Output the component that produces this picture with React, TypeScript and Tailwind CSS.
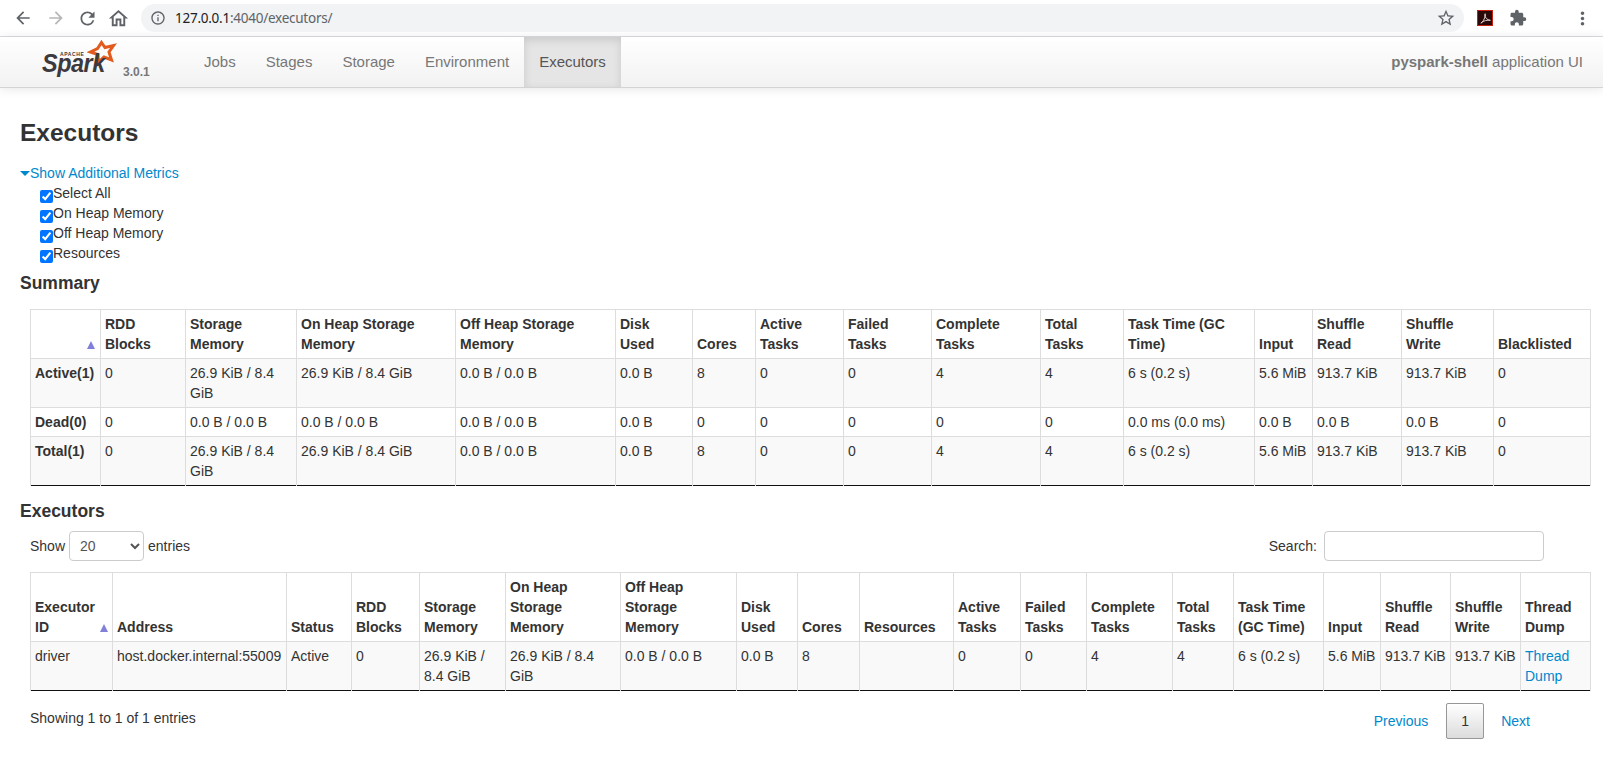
import { MdArrowBack, MdArrowForward, MdExtension, MdInfoOutline, MdMoreVert, MdOutlineHome, MdRefresh, MdStarBorder } from "react-icons/md";

const summaryCols = ["w-[70px]", "w-[85px]", "w-[111px]", "w-[159px]", "w-[160px]", "w-[77px]", "w-[63px]", "w-[88px]", "w-[88px]", "w-[109px]", "w-[83px]", "w-[131px]", "w-[58px]", "w-[89px]", "w-[92px]", "w-[97px]"];
const executorCols = ["w-[82px]", "w-[174px]", "w-[65px]", "w-[68px]", "w-[86px]", "w-[115px]", "w-[116px]", "w-[61px]", "w-[62px]", "w-[94px]", "w-[67px]", "w-[66px]", "w-[86px]", "w-[61px]", "w-[90px]", "w-[57px]", "w-[70px]", "w-[70px]", "w-[70px]"];

const summaryHead = ["", "RDD Blocks", "Storage Memory", "On Heap Storage Memory", "Off Heap Storage Memory", "Disk Used", "Cores", "Active Tasks", "Failed Tasks", "Complete Tasks", "Total Tasks", "Task Time (GC Time)", "Input", "Shuffle Read", "Shuffle Write", "Blacklisted"];
const summaryRows = [
  ["Active(1)", "0", "26.9 KiB / 8.4 GiB", "26.9 KiB / 8.4 GiB", "0.0 B / 0.0 B", "0.0 B", "8", "0", "0", "4", "4", "6 s (0.2 s)", "5.6 MiB", "913.7 KiB", "913.7 KiB", "0"],
  ["Dead(0)", "0", "0.0 B / 0.0 B", "0.0 B / 0.0 B", "0.0 B / 0.0 B", "0.0 B", "0", "0", "0", "0", "0", "0.0 ms (0.0 ms)", "0.0 B", "0.0 B", "0.0 B", "0"],
  ["Total(1)", "0", "26.9 KiB / 8.4 GiB", "26.9 KiB / 8.4 GiB", "0.0 B / 0.0 B", "0.0 B", "8", "0", "0", "4", "4", "6 s (0.2 s)", "5.6 MiB", "913.7 KiB", "913.7 KiB", "0"],
];

const executorHead = ["Executor ID", "Address", "Status", "RDD Blocks", "Storage Memory", "On Heap Storage Memory", "Off Heap Storage Memory", "Disk Used", "Cores", "Resources", "Active Tasks", "Failed Tasks", "Complete Tasks", "Total Tasks", "Task Time (GC Time)", "Input", "Shuffle Read", "Shuffle Write", "Thread Dump"];
const executorRow = ["driver", "host.docker.internal:55009", "Active", "0", "26.9 KiB / 8.4 GiB", "26.9 KiB / 8.4 GiB", "0.0 B / 0.0 B", "0.0 B", "8", "", "0", "0", "4", "4", "6 s (0.2 s)", "5.6 MiB", "913.7 KiB", "913.7 KiB"];

const tabs = ["Jobs", "Stages", "Storage", "Environment"];
const metrics = ["Select All", "On Heap Memory", "Off Heap Memory", "Resources"];

function SortArrow({ className }: { className: string }) {
  return <span className={`absolute h-0 w-0 border-x-[4.5px] border-b-[8px] border-x-transparent border-b-[#8080d8] ${className}`} />;
}

function Toolbar() {
  return (
    <div className="flex h-[37px] items-center border-b border-[#dadce0] bg-white text-[#5f6368]">
      <MdArrowBack className="ml-[13px] text-[20px]" />
      <MdArrowForward className="ml-[13px] text-[20px] text-[#b4b6b9]" />
      <MdRefresh className="ml-[11px] text-[21px]" />
      <MdOutlineHome className="ml-[9px] text-[23px]" />
      <div className="ml-[11px] flex h-[28px] w-[1323px] items-center rounded-full bg-[#f1f3f4] pl-[9px] pr-[8px]">
        <MdInfoOutline className="text-[16px]" />
        <span className="ml-[9px] font-['Noto_Sans',sans-serif] text-[13.5px] tracking-[-0.25px]">
          <span className="text-[#202124]">127.0.0.1</span>:4040/executors/
        </span>
        <MdStarBorder className="ml-auto text-[20px]" />
      </div>
      <div className="ml-[13px] flex h-[16px] w-[16px] items-center justify-center border-[1.5px] border-[#c8200c] bg-[#2a0a08]">
        <svg viewBox="0 0 14 14" className="h-[13px] w-[13px]" fill="none" stroke="#e8dcdc" strokeWidth="1">
          <path d="M2 12c2-1 4-4 5-9 0-1.500-.800-1.500-.800 0 0 3 2.500 5.500 6 6-3-.500-7 0-10.200 3z" />
        </svg>
      </div>
      <MdExtension className="ml-[16px] text-[18px]" />
      <MdMoreVert className="ml-[45px] text-[21px]" />
    </div>
  );
}

function SparkLogo() {
  return (
    <div className="relative h-[50px] w-[189px]">
      <svg viewBox="0 0 30 28" className="absolute left-[87px] top-[2px] h-[28px] w-[30px]">
        <path d="M14.500 3.500 18 8.500 26.500 6.500 22 13 24.500 21 17 18 11.500 23 11 15.500 3.500 13 10.500 9.500z" fill="none" stroke="#e25a1c" strokeWidth="3" strokeMiterlimit="8" />
      </svg>
      <span className="absolute left-[60px] top-[16px] font-['Liberation_Sans',sans-serif] text-[5px] font-bold leading-[3px] tracking-[0.6px] text-[#3c3a3e]">APACHE</span>
      <span className="absolute left-[42px] top-[21px] origin-left scale-x-[0.9] font-['Liberation_Sans',sans-serif] text-[26px] font-bold italic leading-[10px] tracking-[-0.5px] text-[#3c3a3e]">Spark</span>
      <span className="absolute left-[123px] top-[28px] text-[12px] font-bold leading-[14px] text-[#777]">3.0.1</span>
    </div>
  );
}

function NavBar() {
  return (
    <div className="flex h-[51px] items-stretch border-b border-[#d4d4d4] bg-gradient-to-b from-white to-[#f2f2f2] text-[15px] leading-[20px] shadow-[0_1px_10px_rgba(0,0,0,0.1)]">
      <SparkLogo />
      {tabs.map((t) => (
        <a key={t} className="flex items-center px-[15px] text-[#777]">{t}</a>
      ))}
      <a className="flex items-center bg-[#e5e5e5] px-[15px] text-[#555] shadow-[inset_0_3px_8px_rgba(0,0,0,0.125)]">Executors</a>
      <p className="ml-auto flex items-center pr-[20px] text-[#777]">
        <strong>pyspark-shell</strong>&nbsp;application UI
      </p>
    </div>
  );
}

function SummaryTable() {
  return (
    <table className="ml-[10px] w-[1560px] table-fixed border-collapse border-b border-b-[#111]">
      <colgroup>
        {summaryCols.map((c, i) => <col key={i} className={c} />)}
      </colgroup>
      <thead>
        <tr>
          {summaryHead.map((h, i) => (
            <th key={i} className="relative border border-[#ddd] py-[4px] pl-[4px] pr-[5px] text-left align-bottom font-bold">
              {h}
              {i === 0 && <SortArrow className="bottom-[9px] right-[5px]" />}
            </th>
          ))}
        </tr>
      </thead>
      <tbody>
        {summaryRows.map((row, r) => (
          <tr key={r} className={r === 1 ? "bg-white" : "bg-[#f9f9f9]"}>
            {row.map((c, i) => (
              <td key={i} className={`border-x border-t border-[#ddd] py-[4px] pl-[4px] pr-[2px] align-top ${i === 0 ? "font-bold" : ""} ${i >= 12 && i <= 14 ? "whitespace-nowrap" : ""}`}>{c}</td>
            ))}
          </tr>
        ))}
      </tbody>
    </table>
  );
}

function ExecutorsTable() {
  return (
    <table className="ml-[10px] w-[1560px] table-fixed border-collapse border-b border-b-[#111]">
      <colgroup>
        {executorCols.map((c, i) => <col key={i} className={c} />)}
      </colgroup>
      <thead>
        <tr>
          {executorHead.map((h, i) => (
            <th key={i} className="relative border border-[#ddd] py-[4px] pl-[4px] pr-[5px] text-left align-bottom font-bold">
              {h}
              {i === 0 && <SortArrow className="bottom-[9px] right-[4px]" />}
            </th>
          ))}
        </tr>
      </thead>
      <tbody>
        <tr className="bg-[#f9f9f9]">
          {executorRow.map((c, i) => (
            <td key={i} className={`border-x border-t border-[#ddd] py-[4px] pl-[4px] pr-[5px] align-top ${i >= 15 ? "whitespace-nowrap" : ""}`}>{c}</td>
          ))}
          <td className="border-x border-t border-[#ddd] py-[4px] pl-[4px] pr-[5px] align-top">
            <a className="text-[#0088cc]">Thread Dump</a>
          </td>
        </tr>
      </tbody>
    </table>
  );
}

export default function App() {
  return (
    <div className="h-[773px] overflow-hidden bg-white font-['Liberation_Sans',Arial,sans-serif] text-[14px] leading-[20px] text-[#333]">
      <Toolbar />
      <NavBar />
      <main className="px-[20px]">
        <h3 className="mt-[25px] text-[24.5px] font-bold leading-[40px]">Executors</h3>
        <div className="mt-[10px]">
          <a className="flex items-center text-[#0088cc]">
            <span className="h-0 w-0 border-x-[5px] border-t-[5px] border-x-transparent border-t-[#0088cc]" />
            Show Additional Metrics
          </a>
          <div className="pl-[20px]">
            {metrics.map((m) => (
              <label key={m} className="flex h-[20px] items-end">
                <input type="checkbox" defaultChecked className="h-[13px] w-[13px] accent-[#0075ff]" />
                <span className="self-start">{m}</span>
              </label>
            ))}
          </div>
        </div>
        <h4 className="mt-[10px] text-[17.5px] font-bold leading-[20px]">Summary</h4>
        <div className="mt-[16px]">
          <SummaryTable />
        </div>
        <h4 className="mt-[15px] text-[17.5px] font-bold leading-[20px]">Executors</h4>
        <div className="mt-[10px] ml-[10px] flex h-[30px] items-center">
          <span>Show</span>
          <select className="ml-[4px] h-[30px] w-[75px] rounded-[4px] border border-[#ccc] bg-white px-[6px] text-[14px] text-[#555]">
            <option>20</option>
          </select>
          <span className="ml-[4px]">entries</span>
          <span className="ml-auto">Search:</span>
          <input type="text" className="ml-[7px] mr-[39px] h-[30px] w-[220px] rounded-[4px] border border-[#ccc]" />
        </div>
        <div className="mt-[11px]">
          <ExecutorsTable />
        </div>
        <div className="ml-[10px] mt-[12px] flex items-start">
          <span className="mt-[5px]">Showing 1 to 1 of 1 entries</span>
          <div className="ml-auto mr-[53px] flex items-center text-[#0088cc]">
            <a>Previous</a>
            <a className="ml-[18px] flex h-[36px] w-[38px] items-center justify-center rounded-[2px] border border-[#979797] bg-gradient-to-b from-white to-[#dcdcdc] text-[#333]">1</a>
            <a className="ml-[17px]">Next</a>
          </div>
        </div>
      </main>
    </div>
  );
}
